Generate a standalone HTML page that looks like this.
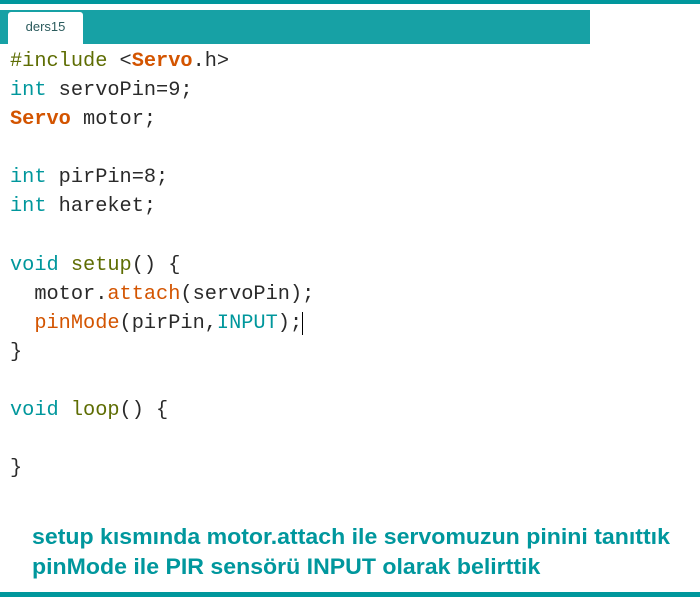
<!DOCTYPE html>
<html><head><meta charset="utf-8"><style>
body{margin:0;width:700px;height:597px;background:#fff;position:relative;overflow:hidden}
.top{position:absolute;left:0;top:0;width:700px;height:4px;background:#00979c}
.bar{position:absolute;left:0;top:10px;width:590px;height:34px;background:#17a1a5}
.tab{position:absolute;left:8px;top:12px;width:75px;height:32px;background:#fff;border-radius:3px 3px 0 0;font:13px "Liberation Sans",sans-serif;color:#2b5b5d;line-height:30px;text-align:center}
pre{position:absolute;left:10px;top:47px;margin:0;font:20.3px/29.1px "Liberation Mono",monospace;color:#2a2a2a}
.k{color:#00979c}.o{color:#d35400}.b{color:#d35400;font-weight:bold}.p{color:#5e6d03}
.cur{border-right:1.5px solid #000}
.txt{position:absolute;left:32px;font:bold 22px "Liberation Sans",sans-serif;color:#00979d;transform-origin:left;white-space:nowrap}
.bot{position:absolute;left:0;top:592px;width:700px;height:5px;background:#00979c}
</style></head><body>
<div class="top"></div><div class="bar"></div><div class="tab">ders15</div>
<pre><span class="p">#include</span> &lt;<span class="b">Servo</span>.h&gt;
<span class="k">int</span> servoPin=9;
<span class="b">Servo</span> motor;

<span class="k">int</span> pirPin=8;
<span class="k">int</span> hareket;

<span class="k">void</span> <span class="p">setup</span>() {
  motor.<span class="o">attach</span>(servoPin);
  <span class="o">pinMode</span>(pirPin,<span class="k">INPUT</span>);<span class="cur"></span>
}

<span class="k">void</span> <span class="p">loop</span>() {

}</pre>
<div class="txt" style="top:524px;transform:scaleX(1.05)">setup kısmında motor.attach ile servomuzun pinini tanıttık</div>
<div class="txt" style="top:554px;transform:scaleX(1.05)">pinMode ile PIR sensörü INPUT olarak belirttik</div>
<div class="bot"></div>
</body></html>
